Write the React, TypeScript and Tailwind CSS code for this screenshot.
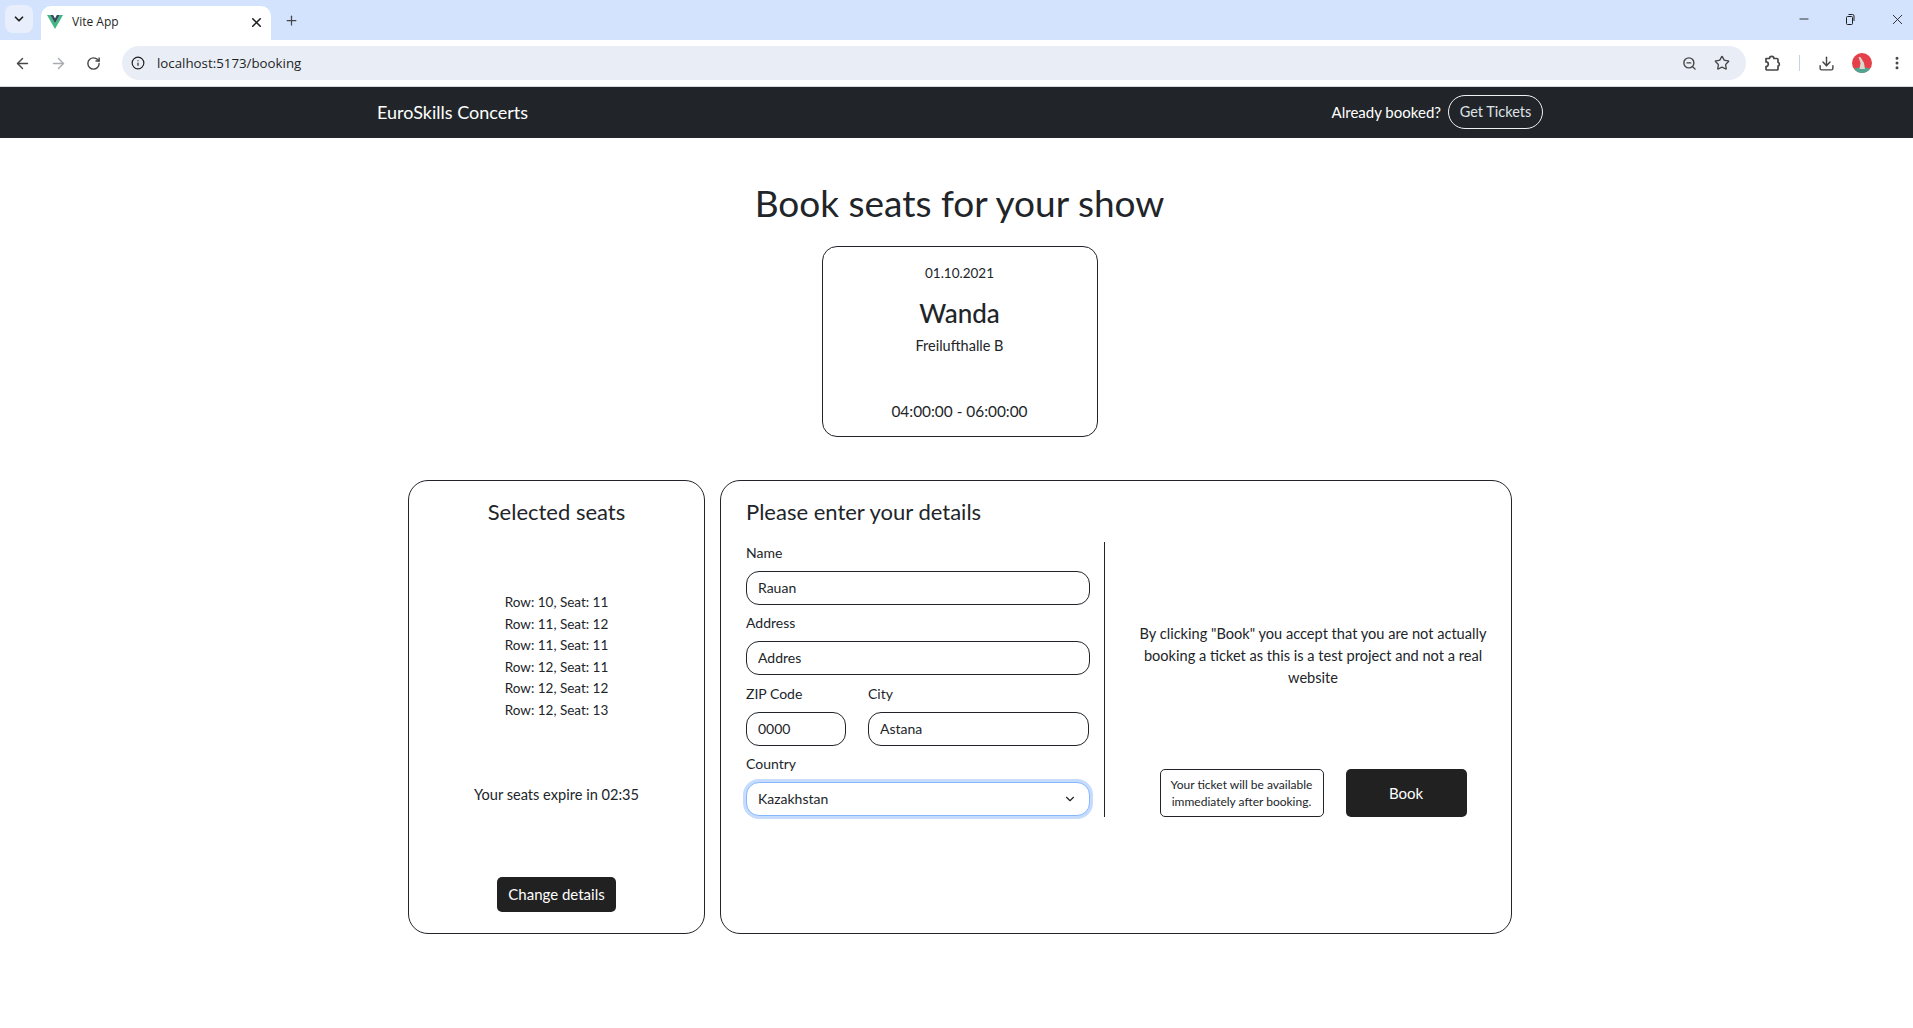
import { ArrowLeft, ArrowRight, ChevronDown, Download, EllipsisVertical, Info, Minus, Plus, RotateCw, Star, X, ZoomOut } from 'lucide-react';

const seats = [
  'Row: 10, Seat: 11',
  'Row: 11, Seat: 12',
  'Row: 11, Seat: 11',
  'Row: 12, Seat: 11',
  'Row: 12, Seat: 12',
  'Row: 12, Seat: 13',
];

const inputClass =
  'h-[34px] w-full rounded-[13px] border border-[#212529] bg-white px-[11px] pb-px text-[14px] text-[#212529] outline-none';

const Field = ({ label, value, className }: { label: string; value: string; className?: string }) => (
  <div className={className}>
    <label className="mb-2 block h-[21px] text-[14px] leading-[21px]">{label}</label>
    <input className={inputClass} defaultValue={value} />
  </div>
);

const VueLogo = () => (
  <svg width="16" height="14" viewBox="0 0 16 14">
    <path d="M0 0h3.2L8 8.2 12.8 0H16L8 14z" fill="#41b883" />
    <path d="M3.2 0h2.9L8 3.4 9.9 0h2.9L8 8.2z" fill="#35495e" />
  </svg>
);

const Avatar = () => (
  <svg width="20" height="20" viewBox="0 0 20 20">
    <circle cx="10" cy="10" r="10" fill="#e5404a" />
    <path d="M2 15.500c4-1.500 12-1.500 16 0-2 3.500-5 4.500-8 4.500s-6-1-8-4.500z" fill="#4fa58f" />
    <path d="M6.500 4l2 0 3.500 6 1 6H7.500l1-6z" fill="#d9d5cf" />
  </svg>
);

// chrome's extensions icon, lucide's puzzle is a different shape
const ExtensionsIcon = () => (
  <svg width="18" height="18" viewBox="0 0 18 18" fill="none" stroke="#474747" strokeWidth="1.700" strokeLinejoin="round">
    <path d="M2 4.500h3.500a2.200 2.200 0 0 1 4.400 0h3.100a1 1 0 0 1 1 1v2.800a2 2 0 0 1 0 3.800v2.900a1 1 0 0 1-1 1H3a1 1 0 0 1-1-1v-2.500a2.300 2.300 0 0 0 0-4.600z" />
  </svg>
);

const BrowserChrome = () => (
  <div className="h-[87px] bg-white font-['Open_Sans',sans-serif]">
    <div className="flex h-10 items-end bg-[#d3e3fd] pl-[5px]">
      <div className="mb-[7px] flex h-[28px] w-[28px] items-center justify-center rounded-lg bg-[#e8eefb]">
        <ChevronDown size={14} strokeWidth={3} color="#1f1f1f" />
      </div>
      <div className="ml-2 flex h-[34px] w-[230px] items-center rounded-t-[10px] bg-white pb-[2px] pl-[6px] pr-[7px]">
        <VueLogo />
        <span className="ml-[9px] flex-1 text-[12px] text-[#1f1f1f]">Vite App</span>
        <X size={15} strokeWidth={2.500} color="#1f1f1f" />
      </div>
      <div className="ml-[13px] mb-[10px] flex h-[20px] items-center">
        <Plus size={15} strokeWidth={2} color="#474747" />
      </div>
      <div className="ml-auto mb-[11px] flex h-[20px] items-center gap-[33px] pr-[7px]">
        <Minus size={14} strokeWidth={1.500} color="#1f1f1f" />
        <svg width="12" height="12" viewBox="0 0 12 12" fill="none" stroke="#1f1f1f">
          <rect x="2.500" y="3.500" width="6" height="8" rx="1" />
          <path d="M4.500 1.500h4a1.500 1.500 0 0 1 1.500 1.500v5" />
        </svg>
        <X size={17} strokeWidth={1.250} color="#1f1f1f" />
      </div>
    </div>
    <div className="flex h-[47px] items-center border-b border-[#d8dade]">
      <div className="flex w-[122px] items-center gap-[19px] pl-[14px]">
        <ArrowLeft size={17} strokeWidth={2} color="#474747" />
        <ArrowRight size={17} strokeWidth={2} color="#a8abaf" />
        <RotateCw size={15} strokeWidth={2.250} color="#474747" />
      </div>
      <div className="flex h-[34px] w-[1624px] items-center rounded-full bg-[#e9eef6] pl-[9px] pr-[16px]">
        <Info size={14} strokeWidth={2} color="#1f1f1f" />
        <span className="ml-[12px] flex-1 pt-px text-[13.300px] text-[#1f1f1f]">localhost:5173/booking</span>
        <ZoomOut size={15} strokeWidth={2.250} color="#474747" />
        <Star size={16} strokeWidth={2} color="#474747" className="ml-[17px]" />
      </div>
      <div className="ml-[18px] flex">
        <ExtensionsIcon />
      </div>
      <div className="ml-[17px] h-[16px] w-px bg-[#c7d3e4]" />
      <Download size={17} strokeWidth={2} color="#474747" className="ml-[18px]" />
      <div className="ml-[17px] flex">
        <Avatar />
      </div>
      <EllipsisVertical size={16} strokeWidth={2.500} color="#474747" className="ml-[17px]" />
    </div>
  </div>
);

export default function App() {
  return (
    <div className="min-h-[1028px] bg-white font-['Lato',sans-serif] text-[#212529]">
      <BrowserChrome />

      <nav className="flex h-[51px] items-center justify-between bg-[#212529] pl-[377px] pr-[370px] pb-px text-white">
        <span className="text-[18px]">EuroSkills Concerts</span>
        <div className="flex items-center gap-[7px]">
          <span className="text-[15px]">Already booked?</span>
          <button className="h-[34px] w-[95px] rounded-full border border-[#f1f1f1] text-[14.500px] text-[#dee2e6]">
            Get Tickets
          </button>
        </div>
      </nav>

      <div className="pl-[6px]">
        <h1 className="mt-[41px] text-center text-[37px] leading-[48px]">Book seats for your show</h1>

        <div className="mx-auto mt-[19px] flex h-[191px] w-[276px] flex-col items-center rounded-[15px] border border-[#212529]">
          <div className="mt-[16px] text-[13.500px] leading-[20px]">01.10.2021</div>
          <div className="mt-[14px] text-[26px] leading-[32px] font-medium">Wanda</div>
          <div className="mt-[7px] text-[14.500px] leading-[20px]">Freilufthalle B</div>
          <div className="mt-auto mb-[15px] text-[15.400px] leading-[20px]">04:00:00 - 06:00:00</div>
        </div>

        <div className="mt-[43px] flex justify-center gap-[15px] pl-px">
          <section className="flex h-[454px] w-[297px] flex-col items-center rounded-[20px] border border-[#212529]">
            <h2 className="mt-[16px] text-[22px] leading-[30px]">Selected seats</h2>
            <ul className="mt-[65px] text-center text-[13.500px] leading-[21.500px]">
              {seats.map((seat, i) => (
                <li key={i}>{seat}</li>
              ))}
            </ul>
            <p className="mt-[63px] text-[14.600px] leading-[22px]">Your seats expire in 02:35</p>
            <button className="mt-[71px] h-[35px] w-[119px] rounded-[5px] bg-[#212121] text-[15px] text-white">
              Change details
            </button>
          </section>

          <section className="h-[454px] w-[792px] rounded-[20px] border border-[#212529] pl-[25px]">
            <h2 className="mt-[16px] h-[45px] text-[22px] leading-[30px]">Please enter your details</h2>
            <div className="flex">
              <div className="flex w-[344px] flex-col gap-[7.300px]">
                <Field label="Name" value="Rauan" />
                <Field label="Address" value="Addres" />
                <div className="flex gap-[22px]">
                  <Field label="ZIP Code" value="0000" className="w-[100px]" />
                  <Field label="City" value="Astana" className="w-[221px]" />
                </div>
                <div>
                  <label className="mb-2 block h-[21px] text-[14px] leading-[21px]">Country</label>
                  <div className="relative">
                    <select className="h-[34px] w-full appearance-none rounded-[13px] border border-[#86b7fe] bg-white px-[11px] text-[14px] text-[#212529] shadow-[0_0_0_3px_#c5dcfe] outline-none">
                      <option>Kazakhstan</option>
                    </select>
                    <ChevronDown size={14} strokeWidth={2} className="pointer-events-none absolute top-[10px] right-[13px]" />
                  </div>
                </div>
              </div>

              <div className="ml-[14px] flex h-[275px] w-[391px] flex-col items-center border-l border-[#212529] pl-[26px]">
                <p className="mt-[81px] w-[366px] text-center text-[14.600px] leading-[22px]">
                  By clicking "Book" you accept that you are not actually booking a ticket as this is a test project and not a real website
                </p>
                <div className="mt-auto flex gap-[22px]">
                  <div className="flex h-[48px] w-[164px] items-center justify-center rounded-[5px] border border-[#212529] text-center text-[12px] leading-[17px]">
                    Your ticket will be available immediately after booking.
                  </div>
                  <button className="h-[48px] w-[121px] rounded-[5px] bg-[#212121] text-[15px] text-white">Book</button>
                </div>
              </div>
            </div>
          </section>
        </div>
      </div>
    </div>
  );
}
